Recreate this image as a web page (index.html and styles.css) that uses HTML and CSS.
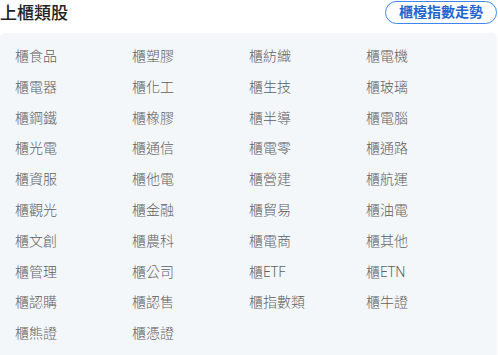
FILE: index.html
```html
<!DOCTYPE html>
<html lang="zh-Hant">
<head>
<meta charset="utf-8">
<title>上櫃類股</title>
<link rel="stylesheet" href="styles.css">
</head>
<body>
<div class="wrap">
  <div class="header">
    <h2 class="title">上櫃類股</h2>
    <a class="trend-btn" href="#">櫃檯指數走勢</a>
  </div>
  <div class="panel">
    <ul class="grid">
      <li>櫃食品</li><li>櫃塑膠</li><li>櫃紡織</li><li>櫃電機</li>
      <li>櫃電器</li><li>櫃化工</li><li>櫃生技</li><li>櫃玻璃</li>
      <li>櫃鋼鐵</li><li>櫃橡膠</li><li>櫃半導</li><li>櫃電腦</li>
      <li>櫃光電</li><li>櫃通信</li><li>櫃電零</li><li>櫃通路</li>
      <li>櫃資服</li><li>櫃他電</li><li>櫃營建</li><li>櫃航運</li>
      <li>櫃觀光</li><li>櫃金融</li><li>櫃貿易</li><li>櫃油電</li>
      <li>櫃文創</li><li>櫃農科</li><li>櫃電商</li><li>櫃其他</li>
      <li>櫃管理</li><li>櫃公司</li><li>櫃ETF</li><li>櫃ETN</li>
      <li>櫃認購</li><li>櫃認售</li><li>櫃指數類</li><li>櫃牛證</li>
      <li>櫃熊證</li><li>櫃憑證</li>
    </ul>
  </div>
</div>
</body>
</html>
```
FILE: styles.css
```css
html, body {
  margin: 0;
  padding: 0;
  background: #ffffff;
}
body {
  font-family: "Noto Sans", "Noto Sans CJK TC", sans-serif;
}
.wrap {
  width: 497px;
}
.header {
  display: flex;
  justify-content: space-between;
  align-items: flex-start;
  height: 25px;
}
.title {
  margin: 0;
  font-size: 17px;
  font-weight: 500;
  color: #222222;
  line-height: 25px;
}
.trend-btn {
  display: inline-block;
  box-sizing: border-box;
  height: 23px;
  margin-top: 1px;
  padding: 0 13px;
  border: 1.5px solid #3d86f0;
  border-radius: 12px;
  color: #1f66d1;
  font-size: 14px;
  font-weight: 700;
  line-height: 20px;
  text-decoration: none;
}
.panel {
  margin-top: 8px;
  background: #f4f7fa;
  border-radius: 5px;
  padding: 8px 0 14px 15px;
}
.grid {
  list-style: none;
  margin: 0;
  padding: 0;
  display: grid;
  grid-template-columns: repeat(4, 117px);
  grid-auto-rows: 30.8px;
}
.grid li {
  font-size: 14px;
  font-weight: 300;
  line-height: 30.8px;
  color: #5f5f5f;
}
```
